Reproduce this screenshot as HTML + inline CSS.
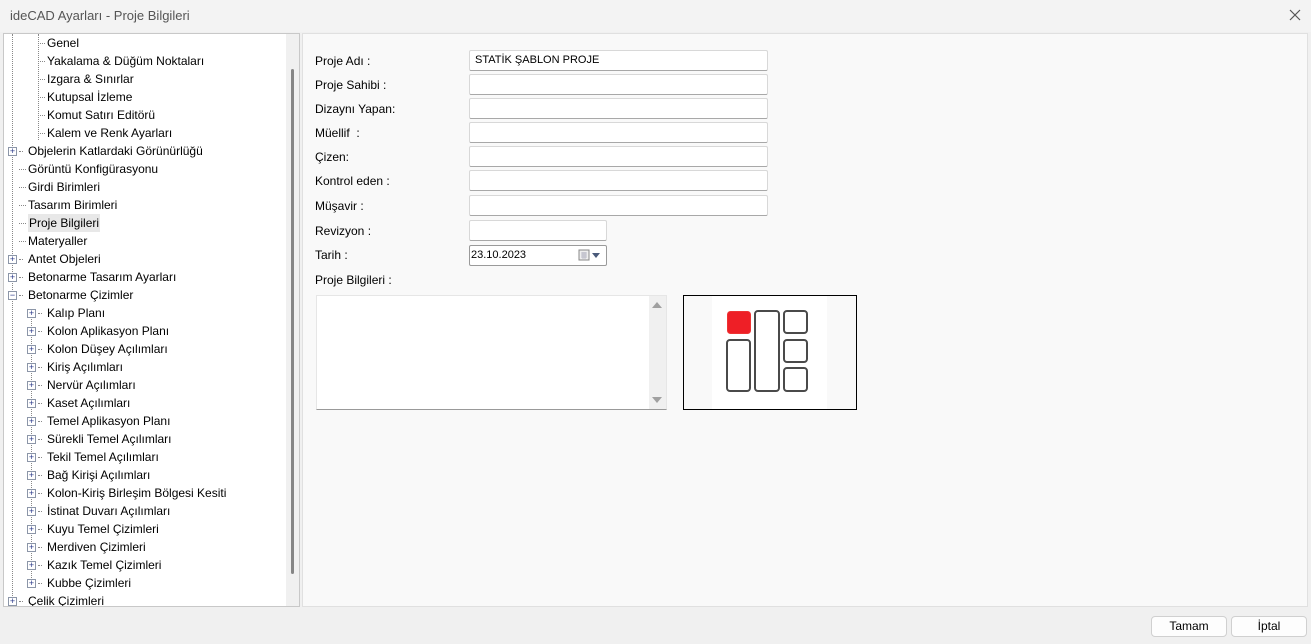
<!DOCTYPE html><html><head><meta charset="utf-8"><style>
*{box-sizing:border-box;margin:0;padding:0}
body{width:1311px;height:644px;background:#f0f0f0;font-family:"Liberation Sans",sans-serif;font-size:12px;color:#000;position:relative;overflow:hidden}
.a{position:absolute}
.title{left:0;top:0;width:1311px;height:32px;background:#f3f3f3;color:#555;font-size:13px;line-height:32px;padding-left:10px}
.tree{left:3px;top:33px;width:297px;height:574px;background:#fff;border:1px solid #c8c8c8;overflow:hidden}
.sb{left:282px;top:0;width:15px;height:574px;background:#f0f0f0}
.row{position:absolute;height:18px;line-height:18px;white-space:nowrap}
.box{position:absolute;width:9px;height:9px;border:1px solid #8c96a8;background:#fff;font-size:9px;line-height:7px;text-align:center;color:#2a3a8a}
.dot{position:absolute;border-top:1px dotted #888;width:6px}
.right{left:302px;top:33px;width:1006px;height:574px;background:#f9f9f9;border:1px solid #e0e0e0}
.lbl{position:absolute;left:315px}
.inp{position:absolute;left:469px;width:299px;height:21px;background:#fff;border:1px solid #d8d8d8;border-bottom-color:#a8a8a8;border-radius:2px;padding-left:5px;line-height:19px;font-size:11px}
.btn{position:absolute;top:616px;width:76px;height:21px;background:#fdfdfd;border:1px solid #d0d0d0;border-radius:4px;text-align:center;line-height:19px}
</style></head><body>
<div class="a title">ideCAD Ayarları - Proje Bilgileri</div>
<svg class="a" style="left:1289px;top:9px" width="12" height="12"><path d="M1 1L11 11M11 1L1 11" stroke="#555" stroke-width="1.2"/></svg>
<div class="a tree">
<div class="a" style="left:34px;top:0;height:106px;border-left:1px dotted #888"></div>
<div class="a" style="left:8px;top:0;height:568px;border-left:1px dotted #888"></div>
<div class="a" style="left:27px;top:280px;height:270px;border-left:1px dotted #888"></div>
<div id="rows"></div>
<div class="a sb"><div class="a" style="left:5px;top:35px;width:3px;height:505px;background:#858585;border-radius:2px"></div></div>
</div>
<div class="a right"></div>
<div class="lbl" style="top:54px">Proje Adı :</div><div class="inp" style="top:50px">STATİK ŞABLON PROJE</div>
<div class="lbl" style="top:78px">Proje Sahibi :</div><div class="inp" style="top:74px"></div>
<div class="lbl" style="top:102px">Dizaynı Yapan:</div><div class="inp" style="top:98px"></div>
<div class="lbl" style="top:126px">Müellif&nbsp; :</div><div class="inp" style="top:122px"></div>
<div class="lbl" style="top:150px">Çizen:</div><div class="inp" style="top:146px"></div>
<div class="lbl" style="top:174px">Kontrol eden :</div><div class="inp" style="top:170px"></div>
<div class="lbl" style="top:199px">Müşavir :</div><div class="inp" style="top:195px"></div>
<div class="lbl" style="top:224px">Revizyon :</div><div class="inp" style="top:220px;width:138px"></div>
<div class="lbl" style="top:248px">Tarih :</div>
<div class="inp" style="top:245px;width:138px;border:1px solid #9a9a9a;padding-left:1px">23.10.2023
<svg class="a" style="right:4px;top:3px" width="24" height="13"><rect x="1" y="1" width="10" height="10" fill="#eee" stroke="#888"/><path d="M3 4h6M3 6h6M3 8h6M5 3v7M7 3v7" stroke="#aab" stroke-width=".7"/><path d="M14 4h8l-4 5z" fill="#4a5a7a"/></svg></div>
<div class="lbl" style="top:273px">Proje Bilgileri :</div>
<div class="a" style="left:316px;top:295px;width:351px;height:115px;background:#fff;border:1px solid #e6e6e6;border-bottom:1px solid #999">
<div class="a" style="right:0;top:0;width:17px;height:113px;background:#f0f0f0"></div>
<div class="a" style="right:4px;top:6px;border:5px solid transparent;border-bottom:6px solid #a0a0a0;border-top:0"></div>
<div class="a" style="right:4px;bottom:6px;border:5px solid transparent;border-top:6px solid #a0a0a0;border-bottom:0"></div>
</div>
<div class="a" style="left:683px;top:295px;width:174px;height:115px;border:1px solid #000;background:#f9f9f9">
<svg class="a" style="left:28px;top:0" width="115" height="113"><rect width="115" height="113" fill="#fff"/>
<rect x="15.5" y="15.5" width="23" height="22" rx="3" fill="#ee1f26" stroke="#e33" />
<g fill="none" stroke="#4a4a4a" stroke-width="2"><rect x="15" y="44" width="23" height="51" rx="3"/><rect x="43" y="15" width="24" height="80" rx="3"/><rect x="72" y="15" width="23" height="22" rx="3"/><rect x="72" y="44" width="23" height="22" rx="3"/><rect x="72" y="72" width="23" height="23" rx="3"/></g></svg></div>
<div class="btn" style="left:1151px">Tamam</div>
<div class="btn" style="left:1231px">İptal</div>
<script>
var R=[["Genel",1,0],["Yakalama & Düğüm Noktaları",1,0],["Izgara & Sınırlar",1,0],["Kutupsal İzleme",1,0],["Komut Satırı Editörü",1,0],["Kalem ve Renk Ayarları",1,0],["Objelerin Katlardaki Görünürlüğü",0,"+"],["Görüntü Konfigürasyonu",0,0],["Girdi Birimleri",0,0],["Tasarım Birimleri",0,0],["Proje Bilgileri",0,0,1],["Materyaller",0,0],["Antet Objeleri",0,"+"],["Betonarme Tasarım Ayarları",0,"+"],["Betonarme Çizimler",0,"−"],["Kalıp Planı",1,"+"],["Kolon Aplikasyon Planı",1,"+"],["Kolon Düşey Açılımları",1,"+"],["Kiriş Açılımları",1,"+"],["Nervür Açılımları",1,"+"],["Kaset Açılımları",1,"+"],["Temel Aplikasyon Planı",1,"+"],["Sürekli Temel Açılımları",1,"+"],["Tekil Temel Açılımları",1,"+"],["Bağ Kirişi Açılımları",1,"+"],["Kolon-Kiriş Birleşim Bölgesi Kesiti",1,"+"],["İstinat Duvarı Açılımları",1,"+"],["Kuyu Temel Çizimleri",1,"+"],["Merdiven Çizimleri",1,"+"],["Kazık Temel Çizimleri",1,"+"],["Kubbe Çizimleri",1,"+"],["Çelik Çizimleri",0,"+"]];
var h="";R.forEach(function(r,i){var y=i*18,x=r[1]?43:24,bx=r[1]?23:4;
if(r[2])h+='<div class="box" style="left:'+bx+'px;top:'+(y+5)+'px">'+r[2]+'</div>';
h+='<div class="dot" style="left:'+(x-9)+'px;top:'+(y+9)+'px;width:'+(r[2]?4:7)+'px"></div>';
h+='<div class="row" style="left:'+x+'px;top:'+y+'px;'+(r[3]?'background:#e8e8e8;padding:0 1px;':'')+'">'+r[0]+'</div>';});
document.getElementById("rows").innerHTML=h;
</script>
</body></html>
